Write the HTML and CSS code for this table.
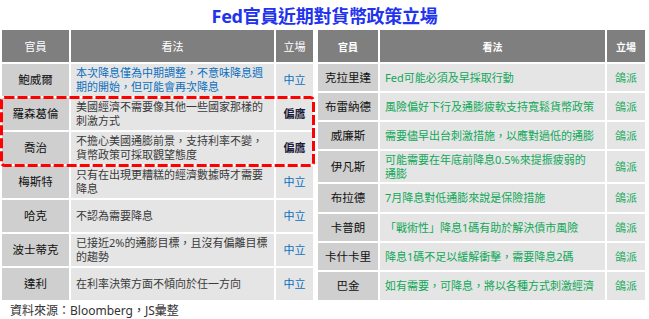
FILE: index.html
```html
<!DOCTYPE html>
<html lang="zh-Hant">
<head>
    <meta charset="UTF-8">
    <title>Fed官員近期對貨幣政策立場</title>
    <link rel="stylesheet" href="styles.css">
</head>
<body>

<div class="page">
    <h1 class="title">Fed官員近期對貨幣政策立場</h1>

    <div class="tables">
        <table class="stance-table left">
            <colgroup>
                <col class="c-name"><col class="c-view"><col class="c-pos">
            </colgroup>
            <tr><th>官員</th><th>看法</th><th>立場</th></tr>
            <tr><td class="name">鮑威爾</td><td class="view blue">本次降息僅為中期調整，不意味降息週期的開始，但可能會再次降息</td><td class="pos blue">中立</td></tr>
            <tr><td class="name">羅森葛倫</td><td class="view">美國經濟不需要像其他一些國家那樣的刺激方式</td><td class="pos hawk">偏鷹</td></tr>
            <tr><td class="name">喬治</td><td class="view">不擔心美國通膨前景，支持利率不變，貨幣政策可採取觀望態度</td><td class="pos hawk">偏鷹</td></tr>
            <tr><td class="name">梅斯特</td><td class="view">只有在出現更糟糕的經濟數據時才需要降息</td><td class="pos blue">中立</td></tr>
            <tr><td class="name">哈克</td><td class="view">不認為需要降息</td><td class="pos blue">中立</td></tr>
            <tr><td class="name">波士蒂克</td><td class="view">已接近2%的通膨目標，且沒有偏離目標的趨勢</td><td class="pos blue">中立</td></tr>
            <tr><td class="name">達利</td><td class="view">在利率決策方面不傾向於任一方向</td><td class="pos blue">中立</td></tr>
        </table>

        <table class="stance-table right">
            <colgroup>
                <col class="c-name"><col class="c-view"><col class="c-pos">
            </colgroup>
            <tr><th>官員</th><th>看法</th><th>立場</th></tr>
            <tr class="h27"><td class="name">克拉里達</td><td class="view green">Fed可能必須及早採取行動</td><td class="pos green">鴿派</td></tr>
            <tr class="h27"><td class="name">布雷納德</td><td class="view green">風險偏好下行及通膨疲軟支持寬鬆貨幣政策</td><td class="pos green">鴿派</td></tr>
            <tr class="h27"><td class="name">威廉斯</td><td class="view green">需要儘早出台刺激措施，以應對過低的通膨</td><td class="pos green">鴿派</td></tr>
            <tr class="h31"><td class="name">伊凡斯</td><td class="view green">可能需要在年底前降息0.5%來提振疲弱的<br>通膨</td><td class="pos green">鴿派</td></tr>
            <tr class="h28"><td class="name">布拉德</td><td class="view green">7月降息對低通膨來說是保險措施</td><td class="pos green">鴿派</td></tr>
            <tr class="h27"><td class="name">卡普朗</td><td class="view green">「戰術性」降息1碼有助於解決債市風險</td><td class="pos green">鴿派</td></tr>
            <tr class="h27"><td class="name">卡什卡里</td><td class="view green">降息1碼不足以緩解衝擊，需要降息2碼</td><td class="pos green">鴿派</td></tr>
            <tr class="h28"><td class="name">巴金</td><td class="view green">如有需要，可降息，將以各種方式刺激經濟</td><td class="pos green">鴿派</td></tr>
        </table>

        <!-- red dashed highlight around the two hawkish rows -->
        <svg class="highlight" width="316" height="72" viewBox="0 0 316 72">
            <rect x="1.5" y="1.5" width="312" height="68" rx="3" ry="3"
                  fill="none" stroke="#ff0000" stroke-width="3" stroke-dasharray="10 3"/>
        </svg>
    </div>

    <div class="source">資料來源：Bloomberg，JS彙整</div>
</div>

</body>
</html>
```

FILE: styles.css
```css
body {
    margin: 0;
    background: #fff;
    font-family: "Noto Sans", "Noto Sans CJK TC", sans-serif;
    color: #333;
}

.page {
    width: 649px;
    height: 319px;
    overflow: hidden;
}

.title {
    margin: 0;
    height: 28px;
    text-align: center;
    font-size: 18px;
    line-height: 32px;
    font-weight: bold;
    color: #2233ee;
    letter-spacing: -0.3px;
}

.tables {
    position: relative;
    display: flex;
    gap: 1px;
}

.stance-table {
    border-collapse: separate;
    border-spacing: 2px;
    table-layout: fixed;
    font-size: 11px;
}

.stance-table.left { width: 315px; }
.stance-table.right { width: 331px; }

.left .c-name { width: 67px; }
.left .c-view { width: 203px; }
.left .c-pos { width: 37px; }

.right .c-name { width: 60px; }
.right .c-view { width: 225px; }
.right .c-pos { width: 38px; }

.stance-table th {
    height: 32px;
    padding: 0;
    background: #7f7f7f;
    color: #fff;
    font-weight: normal;
    font-size: 11px;
}

.right th {
    font-size: 10px;
    font-weight: bold;
}

.stance-table td {
    padding: 0;
    line-height: 14px;
}

.left td { height: 32px; }
.right .h27 td { height: 27px; }
.right .h28 td { height: 28px; }
.right .h31 td { height: 31px; }

td.name {
    background: #cfcfcf;
    color: #111;
    text-align: center;
    font-size: 11.5px;
}

td.view {
    background: #e5e5e5;
    padding: 0 4px 0 5px;
    color: #3a3a3a;
}

td.pos {
    background: #e5e5e5;
    text-align: center;
}

.blue { color: #0a6fc0 !important; }
.green { color: #10a858 !important; }

td.hawk {
    color: #1b1b3a;
    font-weight: bold;
}

.highlight {
    position: absolute;
    left: 0;
    top: 68px;
}

.source {
    margin: 1px 0 0 10px;
    font-size: 12px;
    line-height: 16px;
    color: #333;
}
```
